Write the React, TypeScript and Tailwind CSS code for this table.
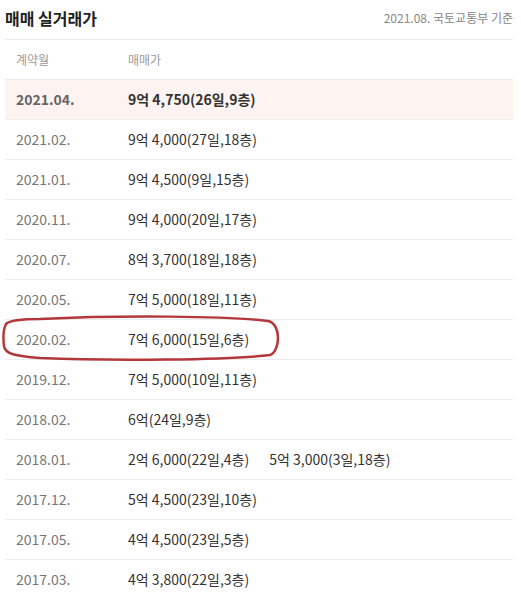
import React from "react";

const rows: { d: string; p: string[]; hl?: boolean }[] = [
  { d: "2021.04.", p: ["9억 4,750(26일,9층)"], hl: true },
  { d: "2021.02.", p: ["9억 4,000(27일,18층)"] },
  { d: "2021.01.", p: ["9억 4,500(9일,15층)"] },
  { d: "2020.11.", p: ["9억 4,000(20일,17층)"] },
  { d: "2020.07.", p: ["8억 3,700(18일,18층)"] },
  { d: "2020.05.", p: ["7억 5,000(18일,11층)"] },
  { d: "2020.02.", p: ["7억 6,000(15일,6층)"] },
  { d: "2019.12.", p: ["7억 5,000(10일,11층)"] },
  { d: "2018.02.", p: ["6억(24일,9층)"] },
  { d: "2018.01.", p: ["2억 6,000(22일,4층)", "5억 3,000(3일,18층)"] },
  { d: "2017.12.", p: ["5억 4,500(23일,10층)"] },
  { d: "2017.05.", p: ["4억 4,500(23일,5층)"] },
  { d: "2017.03.", p: ["4억 3,800(22일,3층)"] },
];

export default function App() {
  return (
    <div
      className="relative w-[521px] h-[597px] overflow-hidden bg-white pl-[5px] pr-[8px]"
      style={{ fontFamily: '"Noto Sans CJK KR", "Noto Sans", sans-serif' }}
    >
      <div className="flex h-[40px] items-center justify-between border-b border-[#e8e8e8] pb-[4px]">
        <span className="text-[16px] font-bold text-[#222]">매매 실거래가</span>
        <span className="text-[12px] text-[#888]">2021.08. 국토교통부 기준</span>
      </div>
      <div className="flex h-[40px] items-center border-b border-[#e8e8e8] text-[12px] text-[#999]">
        <span className="w-[123px] pl-[11px]">계약월</span>
        <span>매매가</span>
      </div>
      {rows.map((r) => (
        <div
          key={r.d}
          className={`flex h-[40px] items-center border-b border-[#ececec] text-[14px] ${
            r.hl ? "bg-[#fdf3f1] font-bold" : ""
          }`}
        >
          <span className={`w-[123px] pl-[11px] ${r.hl ? "text-[#666]" : "text-[#777]"}`}>{r.d}</span>
          <div className="flex gap-[20px] text-[#333]">
            {r.p.map((p) => (
              <span key={p}>{p}</span>
            ))}
          </div>
        </div>
      ))}
      <svg
        className="absolute left-0 top-[312px]"
        width="290"
        height="52"
        viewBox="0 0 290 52"
        fill="none"
      >
        <path
          d="M40 7 C 120 3, 230 4, 268 9 C 282 12, 280 40, 270 43 C 230 48, 110 49, 40 46 C 15 44, 5 42, 4 34 C 3 26, 3 18, 6 12 C 10 8, 22 7, 40 7 Z"
          stroke="#b3373b"
          strokeWidth="2.5"
        />
      </svg>
    </div>
  );
}
